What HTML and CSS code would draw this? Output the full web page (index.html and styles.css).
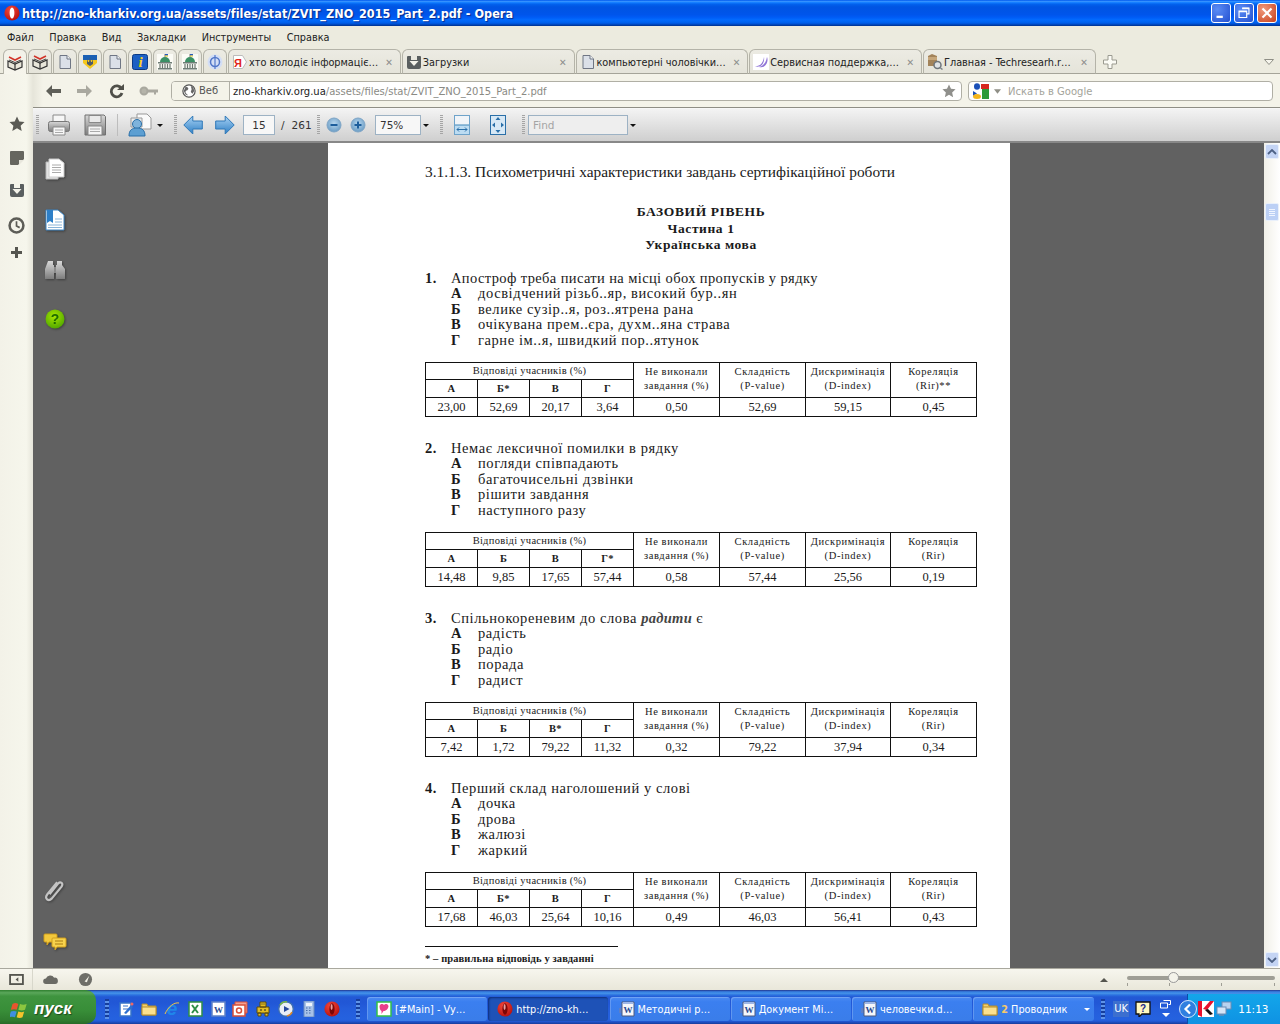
FILE: index.html
```html
<!DOCTYPE html>
<html lang="uk">
<head>
    <meta charset="UTF-8">
    <title>http://zno-kharkiv.org.ua/assets/files/stat/ZVIT_ZNO_2015_Part_2.pdf - Opera</title>
    <link rel="stylesheet" href="styles.css">
</head>
<body>
    <svg class="sprite" width="0" height="0">
        <defs>
            <linearGradient id="g-arrow" x1="0" y1="0" x2="0" y2="1"><stop offset="0" stop-color="#a9d3f5"/><stop offset="1" stop-color="#2f7fc4"/></linearGradient>
            <linearGradient id="g-gray" x1="0" y1="0" x2="0" y2="1"><stop offset="0" stop-color="#d8d8d8"/><stop offset="1" stop-color="#7d7d7d"/></linearGradient>
            <radialGradient id="g-red" cx=".4" cy=".3" r=".8"><stop offset="0" stop-color="#f5483a"/><stop offset="1" stop-color="#b00c0c"/></radialGradient>
            <radialGradient id="g-green" cx=".45" cy=".35" r=".7"><stop offset="0" stop-color="#a6e600"/><stop offset="1" stop-color="#4da400"/></radialGradient>
            <radialGradient id="g-zoom" cx=".5" cy=".4" r=".6"><stop offset="0" stop-color="#b7d7ef"/><stop offset="1" stop-color="#6a9cc4"/></radialGradient>
            <symbol id="i-opera" viewBox="0 0 16 16"><circle cx="8" cy="8" r="7.6" fill="url(#g-red)"/><ellipse cx="8" cy="8" rx="2.4" ry="5.6" fill="#fff"/></symbol>
            <symbol id="i-opera-dark" viewBox="0 0 16 16"><circle cx="8" cy="8" r="7.6" fill="url(#g-red)"/><ellipse cx="8" cy="8" rx="2.6" ry="5.8" fill="#7c0606"/><ellipse cx="7.6" cy="6" rx="1" ry="3" fill="#e9a0a0"/></symbol>
            <symbol id="i-book" viewBox="0 0 16 16"><path d="M2 2l6 3 6-3" fill="none" stroke="#d2352b" stroke-width="1.6"/><path d="M1 6l7 3 7-3v6l-7 3-7-3z" fill="#e8e6da" stroke="#333" stroke-width="1.2"/><path d="M8 9v6" stroke="#333" stroke-width="1.2"/><path d="M2 5l6 2.500 6-2.500" fill="none" stroke="#444"/></symbol>
            <symbol id="i-doc" viewBox="0 0 16 16"><path d="M3 1.500h7l3.500 3.500v9.500h-10.500z" fill="#dbe0e8" stroke="#6f7684"/><path d="M10 1.500v3.500h3.500" fill="#f5f6f8" stroke="#6f7684"/></symbol>
            <symbol id="i-shield" viewBox="0 0 16 16"><path d="M1 1h14v8l-7 6-7-6z" fill="#f6c81e"/><path d="M1 1h14v5h-14z" fill="#1a5fb4"/><path d="M5 4v6l3 2 3-2v-6l-1 4h-1l-1-5-1 5h-1z" fill="#4c5a6b"/></symbol>
            <symbol id="i-info" viewBox="0 0 16 16"><rect x=".5" y=".5" width="15" height="15" rx="2" fill="#1b5fc4" stroke="#0b3a86"/><text x="8.500" y="13" class="svg-i">i</text></symbol>
            <symbol id="i-rada" viewBox="0 0 16 16"><rect width="16" height="16" fill="#fbfbf6"/><path d="M8 0v3" stroke="#777"/><path d="M8 0h3v1.500h-3z" fill="#2459c0"/><path d="M8 1.500h3v1h-3z" fill="#e7c71c"/><path d="M3 8a5 5 0 0 1 10 0z" fill="#3a9065"/><path d="M1 8h14v1.500h-14zM1 14h14v1.500h-14z" fill="#6f7d76"/><path d="M3 10v4M5.500 10v4M8 10v4M10.500 10v4M13 10v4" stroke="#6b7770" stroke-width="1.200"/></symbol>
            <symbol id="i-phi" viewBox="0 0 16 16"><circle cx="8" cy="8" r="7.500" fill="#d3def5"/><circle cx="8" cy="8" r="4.500" fill="none" stroke="#5277c9" stroke-width="1.500"/><path d="M8 1v14" stroke="#5277c9" stroke-width="1.200"/></symbol>
            <symbol id="i-yandex" viewBox="0 0 16 16"><path d="M1.500 1.500h9l4 6.500-4 6.500h-9z" fill="#fff" stroke="#bbb"/><text x="6" y="13" class="svg-ya">Я</text></symbol>
            <symbol id="i-dl" viewBox="0 0 16 16"><path d="M2 2h3v4h6v-4h3a1 1 0 0 1 1 1v10a2 2 0 0 1-2 2h-10a2 2 0 0 1-2-2v-10a1 1 0 0 1 1-1z" fill="#5a5f60"/><path d="M3.500 7h9l-4.500 5z" fill="#f4f3ea"/></symbol>
            <symbol id="i-swoosh" viewBox="0 0 16 16"><rect width="16" height="16" fill="#fff"/><path d="M1 12c5 1 9-2 10-9 1 6-3 12-10 9zM6 13c4-1 7-4 8-10 2 5-2 12-8 10z" fill="#8f74d6"/></symbol>
            <symbol id="i-box" viewBox="0 0 16 16"><path d="M1 2l4-2 5 2v10h-9z" fill="#a2835a"/><path d="M1 3h9v3h-9z" fill="#c6a67a"/><circle cx="10.500" cy="11" r="3.500" fill="#dfe3e6" stroke="#6e757b" stroke-width="1.500"/><path d="M13 13.500l2.500 2" stroke="#7c8388" stroke-width="1.500"/></symbol>
            <symbol id="i-google" viewBox="0 0 16 16"><rect width="16" height="16" fill="#fff"/><path d="M8 1h8v5h-8z" fill="#d7261e"/><path d="M9 6h7v10h-7z" fill="#2c9a3a"/><ellipse cx="4" cy="3.500" rx="3" ry="3.300" fill="#1b50b8"/><path d="M0 8l4 2.500-4 2.500z" fill="#1b50b8"/><ellipse cx="4" cy="13.500" rx="4" ry="2.500" fill="#f4b61b"/></symbol>
            <symbol id="i-star" viewBox="0 0 16 16"><path d="M8 .5l2.300 5 5.200.6-3.900 3.600 1.100 5.300-4.700-2.700-4.700 2.700 1.100-5.300-3.900-3.600 5.200-.6z"/></symbol>
            <symbol id="i-globe" viewBox="0 0 16 16"><circle cx="8" cy="8" r="7" fill="#fff" stroke="#555" stroke-width="1.400"/><path d="M4 3c2 0 4 1 3 3s-3 1-3 3 2 2 3 4l-3-1-2-4zM10 2l3 2 1 4-2 3-2-2 1-3z" fill="#666"/></symbol>
            <symbol id="i-print" viewBox="0 0 24 24"><path d="M6 2h12v7h-12z" fill="#f6f6f6" stroke="#8a8a8a"/><rect x="1.500" y="8.500" width="21" height="10" rx="2" fill="url(#g-gray)" stroke="#777"/><path d="M6 14h12v8h-12z" fill="#f7f7f7" stroke="#8a8a8a"/><path d="M8 17h8M8 19.500h8" stroke="#aaa"/></symbol>
            <symbol id="i-save" viewBox="0 0 24 24"><path d="M2 2h19l1.500 1.500v18.500h-20.500z" fill="url(#g-gray)" stroke="#707070"/><path d="M6 2.500h12v7h-12z" fill="#e9e9e9" stroke="#888"/><path d="M5 13h14v9h-14z" fill="#f4f4f4" stroke="#888"/><path d="M7 16h10M7 18.500h10" stroke="#aaa"/></symbol>
            <symbol id="i-review" viewBox="0 0 24 24"><path d="M9 1h10l4 4v11h-14z" fill="#fafafa" stroke="#999"/><path d="M3 5h11v9h-11z" fill="#eee" stroke="#999"/><circle cx="9" cy="11" r="4.500" fill="#7eb3dc" stroke="#2a6fa8"/><path d="M1 23c0-6 3-8 8-8s8 2 8 8z" fill="#5d9fd2" stroke="#2a6fa8"/></symbol>
            <symbol id="i-arrow" viewBox="0 0 20 20"><path d="M.8 10l9-9v5h9.500v8h-9.500v5z" fill="url(#g-arrow)" stroke="#2f78b8"/></symbol>
            <symbol id="i-minus" viewBox="0 0 16 16"><circle cx="8" cy="8" r="7" fill="url(#g-zoom)" stroke="#7fa5c6"/><path d="M4.500 8h7" stroke="#1d5e9c" stroke-width="2"/></symbol>
            <symbol id="i-plus" viewBox="0 0 16 16"><circle cx="8" cy="8" r="7" fill="url(#g-zoom)" stroke="#7fa5c6"/><path d="M4.500 8h7M8 4.500v7" stroke="#1d5e9c" stroke-width="2"/></symbol>
            <symbol id="i-fitw" viewBox="0 0 16 20"><rect x=".5" y=".5" width="15" height="19" fill="#f0f4f8" stroke="#6ea3ca"/><path d="M1 10h14v9h-14z" fill="#bcdcf2"/><path d="M1 10h14" stroke="#3f86b8"/><path d="M3 14.500h10M3 14.500l2-2M3 14.500l2 2M13 14.500l-2-2M13 14.500l-2 2" stroke="#2a6fa8" fill="none"/></symbol>
            <symbol id="i-fitp" viewBox="0 0 16 20"><rect x=".5" y=".5" width="15" height="19" fill="#d7e8f5" stroke="#2a6fa8"/><path d="M8 2l-2.500 3h5zM8 18l-2.500-3h5zM2 10l3-2.500v5zM14 10l-3-2.500v5z" fill="#2a6fa8"/></symbol>
            <symbol id="i-pages" viewBox="0 0 20 22"><path d="M1 4h12v17h-12z" fill="#e4e4e4" stroke="#bbb"/><path d="M4 1h10l5 4v14h-15z" fill="#fff" stroke="#ccc"/><path d="M7 7h9M7 9.500h9M7 12h9M7 14.500h9" stroke="#aaa"/></symbol>
            <symbol id="i-bookmark" viewBox="0 0 20 22"><path d="M1 1h12l6 5v15h-18z" fill="#fff" stroke="#3f86c4"/><path d="M2 1h6v13l-3-2-3 2z" fill="#2d7fc8"/><path d="M10 10h7M10 13h7M3 16h14M3 18.500h14" stroke="#8ab4d8"/></symbol>
            <symbol id="i-binoc" viewBox="0 0 22 20"><path d="M4 1h5v4h1v14h-9v-10z" fill="url(#g-gray)"/><path d="M13 1h5v4l3 4v10h-9v-14h1z" fill="url(#g-gray)"/><path d="M10 7h2v6h-2z" fill="#8a8a8a"/></symbol>
            <symbol id="i-help" viewBox="0 0 20 20"><circle cx="10" cy="10" r="9.500" fill="url(#g-green)"/><text x="10" y="15" class="svg-help">?</text></symbol>
            <symbol id="i-clip" viewBox="0 0 20 22"><path d="M5 14l8-10c2-2 5 0 3 3l-9 11c-3 3-7 0-4-4l9-11" fill="none" stroke="#c4c4c4" stroke-width="2"/></symbol>
            <symbol id="i-comment" viewBox="0 0 24 18"><path d="M2 1h11a1 1 0 0 1 1 1v6a1 1 0 0 1-1 1h-7l-2 3v-3h-2a1 1 0 0 1-1-1v-6a1 1 0 0 1 1-1z" fill="#f2c83c" stroke="#d19f1c"/><path d="M10 5h12a1 1 0 0 1 1 1v7a1 1 0 0 1-1 1h-8l-2 3v-3h-2a1 1 0 0 1-1-1v-7a1 1 0 0 1 1-1z" fill="#f7d24c" stroke="#d19f1c"/><path d="M12 8h8M12 11h8" stroke="#a87b12"/></symbol>
            <symbol id="i-note" viewBox="0 0 14 14"><path d="M1 0h12a1 1 0 0 1 1 1v7l-6 6h-7a1 1 0 0 1-1-1v-12a1 1 0 0 1 1-1z"/><path d="M9 9h5l-5 5z" fill="#e7e6dc"/></symbol>
            <symbol id="i-clock" viewBox="0 0 16 16"><circle cx="8" cy="8" r="6.500" fill="none" stroke="currentColor" stroke-width="2.400"/><path d="M8 4v4.500l3 1.500" fill="none" stroke="currentColor" stroke-width="1.600"/></symbol>
            <symbol id="i-cloud" viewBox="0 0 16 12"><path d="M3 11a3 3 0 0 1 0-6 5 5 0 0 1 9-1 3.500 3.500 0 0 1 1 7z"/></symbol>
            <symbol id="i-gauge" viewBox="0 0 16 16"><circle cx="8" cy="8" r="7"/><path d="M7 10l5-6-2.500 7z" fill="#f2f1e6"/></symbol>
            <symbol id="i-word" viewBox="0 0 16 16"><path d="M0 7h3v5h-3z" fill="#5b7fc9"/><path d="M3 1h12v14h-12z" fill="#f4f6fb" stroke="#4a5a80"/><rect x="4" y="1" width="10" height="2" fill="#9db6e6"/><text x="9" y="12" class="svg-w">W</text></symbol>
            <symbol id="i-folder" viewBox="0 0 16 16"><path d="M1 3h5l1 2h8v9h-14z" fill="#f3cf6b" stroke="#b48c2a"/><path d="M1 6h14v8h-14z" fill="#fbe08e" stroke="#b48c2a"/></symbol>
            <symbol id="i-mail" viewBox="0 0 16 16"><path d="M2 2h11v13h-11z" fill="#fff" stroke="#3673c9" stroke-width="1.500"/><path d="M5 5h5M5 8h5" stroke="#3673c9"/><path d="M6 12l7-8 2 2-7 7z" fill="#2d6fcf"/><circle cx="14" cy="3" r="1.500" fill="#e66"/></symbol>
            <symbol id="i-ie" viewBox="0 0 16 16"><text x="8" y="14" class="svg-e">e</text><path d="M1 13c3-7 9-12 14-11" fill="none" stroke="#f2c744" stroke-width="1"/></symbol>
            <symbol id="i-excel" viewBox="0 0 16 16"><path d="M2 1h13v14h-13z" fill="#fff" stroke="#2f8f47" stroke-width="1.500"/><path d="M5 4l6 8M11 4l-6 8" stroke="#2f8f47" stroke-width="2"/></symbol>
            <symbol id="i-msw" viewBox="0 0 16 16"><path d="M2 1h13v14h-13z" fill="#fff" stroke="#5f82c8" stroke-width="1.500"/><text x="8.500" y="12" class="svg-w">W</text></symbol>
            <symbol id="i-ppt" viewBox="0 0 16 16"><path d="M3 1h12v11h-12z" fill="#f1a090" stroke="#d9503a"/><path d="M1 4h12v11h-12z" fill="#fff" stroke="#d9503a" stroke-width="1.500"/><circle cx="7" cy="9.500" r="2.500" fill="none" stroke="#d9503a" stroke-width="1.500"/></symbol>
            <symbol id="i-robot" viewBox="0 0 16 16"><path d="M5 1h6v5h-6zM2 6h12v6h-12zM3 12h3v3h-3zM10 12h3v3h-3z" fill="#e2bd23" stroke="#5a4a0d"/><path d="M6.500 3h1M8.500 3h1M5 9h2M9 9h2" stroke="#222"/></symbol>
            <symbol id="i-player" viewBox="0 0 16 16"><circle cx="8" cy="8" r="7.300" fill="#e9eef6" stroke="#3e6fb2" stroke-width="1.400"/><path d="M2 4a7 7 0 0 1 7-3" fill="none" stroke="#78b34a" stroke-width="1.500"/><path d="M14 11a7 7 0 0 1-5 4" fill="none" stroke="#e08a2c" stroke-width="1.500"/><path d="M6 5l5.500 3-5.500 3z" fill="#27489a"/></symbol>
            <symbol id="i-calc" viewBox="0 0 16 16"><path d="M3 0h10v16h-10z" fill="#a8c2e8" stroke="#6b8bbf"/><rect x="5" y="2" width="6" height="3" fill="#eef4fc"/><path d="M5 7h1.500M8 7h1.500M5 9.500h1.500M8 9.500h1.500M5 12h1.500M8 12h1.500" stroke="#4a6ea8"/></symbol>
            <symbol id="i-msg" viewBox="0 0 16 16"><rect x="1" y="1" width="14" height="14" fill="#fff" stroke="#32c04a" stroke-width="1.500"/><path d="M3.500 5a2.500 2.500 0 0 1 4.500-1 2.500 2.500 0 0 1 4.500 1c0 3-3 5-5 5l-2 3v-3c-1.500-.5-2-3-2-5z" fill="#ea3f8b"/></symbol>
            <symbol id="i-bubble" viewBox="0 0 16 16"><path d="M1 1h14v12h-8l-3 3v-3h-3z" fill="#fff8c2" stroke="#111" stroke-width="1.300"/><text x="8" y="11" class="svg-q">?</text></symbol>
            <symbol id="i-kasp" viewBox="0 0 16 16"><rect width="16" height="16" fill="#fff"/><path d="M0 0h4v16l-4-2zM5 8l7-8h4l-7 9z" fill="#e8112d"/><path d="M7 9l5 5 3-1-5-5z" fill="#111"/></symbol>
            <symbol id="i-net" viewBox="0 0 16 16"><rect x="6" y="1" width="9" height="7" fill="#b8d2ef" stroke="#6a8cb5"/><rect x="1" y="6" width="9" height="7" fill="#d6e6f7" stroke="#6a8cb5"/><path d="M3 14h5" stroke="#6a8cb5" stroke-width="1.500"/></symbol>
            <symbol id="i-flag" viewBox="0 0 24 24"><path d="M3 6c3-2 5-1 7 0l-2 7c-2-1-4-1-7 0z" fill="#e8552e"/><path d="M12 6c3 1 5 1 8 0l-2 7c-3 1-5 1-8 0z" fill="#8cc63f"/><path d="M1 15c2-1 5-1 7 0l-2 7c-2-1-4-1-7 0z" fill="#3f8fe0"/><path d="M10 15c3 1 5 1 7 0l-2 7c-2 1-5 1-7 0z" fill="#f5c32c"/></symbol>
        </defs>
    </svg>

    <header class="titlebar">
        <svg class="title-logo"><use href="#i-opera"/></svg>
        <span class="title-text">http://zno-kharkiv.org.ua/assets/files/stat/ZVIT_ZNO_2015_Part_2.pdf - Opera</span>
        <div class="win-btn">
            <svg viewBox="0 0 20 20"><path d="M5 13h7v2.500h-7z" fill="#fff"/></svg>
        </div>
        <div class="win-btn">
            <svg viewBox="0 0 20 20"><path d="M8 4.500h7.500v6.500h-2.500M4.500 8h8.500v7h-8.500z" fill="none" stroke="#fff" stroke-width="1.300"/><path d="M8 5h7.500M4.500 8.500h8.500" stroke="#fff" stroke-width="1.500"/></svg>
        </div>
        <div class="win-btn win-close">
            <svg viewBox="0 0 20 20"><path d="M5 5l10 10M15 5l-10 10" stroke="#fff" stroke-width="2.400"/></svg>
        </div>
    </header>

    <nav class="menubar">
        <span>Файл</span><span>Правка</span><span>Вид</span><span>Закладки</span><span>Инструменты</span><span>Справка</span>
    </nav>

    <div class="tabbar">
        <div class="tab tab-pin tab-active"><svg class="ico"><use href="#i-book"/></svg></div>
        <div class="tab tab-pin"><svg class="ico"><use href="#i-book"/></svg></div>
        <div class="tab tab-pin"><svg class="ico"><use href="#i-doc"/></svg></div>
        <div class="tab tab-pin"><svg class="ico"><use href="#i-shield"/></svg></div>
        <div class="tab tab-pin"><svg class="ico"><use href="#i-doc"/></svg></div>
        <div class="tab tab-pin"><svg class="ico"><use href="#i-info"/></svg></div>
        <div class="tab tab-pin"><svg class="ico"><use href="#i-rada"/></svg></div>
        <div class="tab tab-pin"><svg class="ico"><use href="#i-rada"/></svg></div>
        <div class="tab tab-pin"><svg class="ico"><use href="#i-phi"/></svg></div>
        <div class="tab"><svg class="ico"><use href="#i-yandex"/></svg><span class="tab-text">хто володіє інформаціє…</span><span class="tab-x">✕</span></div>
        <div class="tab"><svg class="ico"><use href="#i-dl"/></svg><span class="tab-text">Загрузки</span><span class="tab-x">✕</span></div>
        <div class="tab"><svg class="ico"><use href="#i-doc"/></svg><span class="tab-text">компьютерні чоловічки…</span><span class="tab-x">✕</span></div>
        <div class="tab"><svg class="ico"><use href="#i-swoosh"/></svg><span class="tab-text">Сервисная поддержка,…</span><span class="tab-x">✕</span></div>
        <div class="tab"><svg class="ico"><use href="#i-box"/></svg><span class="tab-text">Главная - Techresearh.r…</span><span class="tab-x">✕</span></div>
        <svg class="tab-new" viewBox="0 0 14 14"><path d="M5 .5h4v4.500h4.500v4h-4.500v4.500h-4v-4.500h-4.500v-4h4.500z" fill="#fbfbf5" stroke="#9a9a90"/></svg>
        <svg class="tab-list" viewBox="0 0 10 6"><path d="M.5.5h9l-4.500 5z" fill="#f6f5ec" stroke="#8f8f86"/></svg>
    </div>

    <div class="workspace">
        <aside class="sidebar">
            <svg class="side-star"><use href="#i-star"/></svg>
            <svg class="side-note"><use href="#i-note"/></svg>
            <svg class="side-dl"><use href="#i-dl"/></svg>
            <svg class="side-clock"><use href="#i-clock"/></svg>
            <span class="side-plus"></span>
        </aside>

        <div class="content">
            <div class="addressbar">
                <svg class="nav-btn" viewBox="0 0 32 18"><path d="M9 9l6-6v4h9v4h-9v4z" fill="#5f5f58"/></svg>
                <svg class="nav-btn" viewBox="0 0 32 18"><path d="M23 9l-6-6v4h-9v4h9v4z" fill="#a9a89f"/></svg>
                <svg class="nav-btn" viewBox="0 0 32 18"><path d="M20.500 6.500a5.500 5.500 0 1 0 .5 4.500" fill="none" stroke="#4f4f49" stroke-width="2.800"/><path d="M16 8h7v-6z" fill="#4f4f49"/></svg>
                <svg class="nav-btn" viewBox="0 0 32 18"><circle cx="11" cy="9" r="3.500" fill="#b5b4aa" stroke="#a9a89f" stroke-width="2"/><path d="M14 7.500h11v3h-2v2h-2v-2h-7z" fill="#a9a89f"/></svg>
                <div class="addr">
                    <div class="addr-site"><svg class="ico-14"><use href="#i-globe"/></svg><span>Веб</span></div>
                    <div class="addr-url"><b>zno-kharkiv.org.ua</b>/assets/files/stat/ZVIT_ZNO_2015_Part_2.pdf</div>
                    <svg class="addr-star"><use href="#i-star"/></svg>
                </div>
                <div class="search">
                    <svg class="ico"><use href="#i-google"/></svg>
                    <svg class="search-caret" viewBox="0 0 8 5"><path d="M0 0h8l-4 5z" fill="#8f8f86"/></svg>
                    <span>Искать в Google</span>
                </div>
            </div>

            <div class="pdfbar">
                <span class="grip"></span>
                <div class="tb-btn tb-36 gap-2"><svg class="ico-24"><use href="#i-print"/></svg></div>
                <div class="tb-btn tb-36"><svg class="ico-24"><use href="#i-save"/></svg></div>
                <span class="tb-sep"></span>
                <div class="tb-btn tb-review"><svg class="ico-24"><use href="#i-review"/></svg></div>
                <span class="caret caret-review"></span>
                <span class="grip gap-11"></span>
                <div class="tb-btn tb-32"><svg class="ico-20"><use href="#i-arrow"/></svg></div>
                <div class="tb-btn tb-32"><svg class="ico-20 flip"><use href="#i-arrow"/></svg></div>
                <div class="tb-input page-input gap-2">15</div>
                <span class="page-total"><span>/</span><span>261</span></span>
                <span class="grip"></span>
                <div class="tb-btn tb-24 gap-2"><svg class="ico"><use href="#i-minus"/></svg></div>
                <div class="tb-btn tb-24"><svg class="ico"><use href="#i-plus"/></svg></div>
                <div class="tb-input zoom-input gap-5">75%</div>
                <span class="caret gap-2"></span>
                <span class="grip gap-11"></span>
                <div class="tb-btn tb-36 gap-1"><svg class="ico-fit"><use href="#i-fitw"/></svg></div>
                <div class="tb-btn tb-36"><svg class="ico-fit"><use href="#i-fitp"/></svg></div>
                <span class="grip gap-6"></span>
                <div class="tb-input find-input gap-3">Find</div>
                <span class="caret gap-2"></span>
            </div>

            <div class="viewer">
                <div class="pdf-nav">
                    <svg class="pdf-ico pages"><use href="#i-pages"/></svg>
                    <svg class="pdf-ico bookmark"><use href="#i-bookmark"/></svg>
                    <svg class="pdf-ico binoc"><use href="#i-binoc"/></svg>
                    <svg class="pdf-ico help"><use href="#i-help"/></svg>
                    <svg class="pdf-ico clip"><use href="#i-clip"/></svg>
                    <svg class="pdf-ico comment"><use href="#i-comment"/></svg>
                </div>

                <div class="pdf-area">
                    <main class="page">
                        <p class="section-title">3.1.1.3. Психометричні характеристики завдань сертифікаційної роботи</p>
                        <div class="heading">
                            <div>БАЗОВИЙ РІВЕНЬ</div>
                            <div>Частина 1</div>
                            <div>Українська мова</div>
                        </div>

                        <section class="task">
                            <div class="q q-tight"><b>1.</b><span>Апостроф треба писати на місці обох пропусків у рядку</span></div>
                            <div class="opt"><b>А</b><span>досвідчений різьб..яр, високий бур..ян</span></div>
                            <div class="opt"><b>Б</b><span>велике сузір..я, роз..ятрена рана</span></div>
                            <div class="opt"><b>В</b><span>очікувана прем..єра, духм..яна страва</span></div>
                            <div class="opt"><b>Г</b><span>гарне ім..я, швидкий пор..ятунок</span></div>
                            <table class="stats">
                                <colgroup><col class="c-a"><col class="c-a"><col class="c-a"><col class="c-a"><col class="c-b"><col class="c-b"><col class="c-c"><col></colgroup>
                                <tr class="r1"><th colspan="4">Відповіді учасників (%)</th><th rowspan="2">Не виконали<br>завдання (%)</th><th rowspan="2">Складність<br>(P-value)</th><th rowspan="2">Дискримінація<br>(D-index)</th><th rowspan="2">Кореляція<br>(Rir)**</th></tr>
                                <tr class="r2"><th class="l">А</th><th class="l">Б*</th><th class="l">В</th><th class="l">Г</th></tr>
                                <tr class="r3"><td>23,00</td><td>52,69</td><td>20,17</td><td>3,64</td><td>0,50</td><td>52,69</td><td>59,15</td><td>0,45</td></tr>
                            </table>
                        </section>

                        <section class="task">
                            <div class="q"><b>2.</b><span>Немає лексичної помилки в рядку</span></div>
                            <div class="opt"><b>А</b><span>погляди співпадають</span></div>
                            <div class="opt"><b>Б</b><span>багаточисельні дзвінки</span></div>
                            <div class="opt"><b>В</b><span>рішити завдання</span></div>
                            <div class="opt"><b>Г</b><span>наступного разу</span></div>
                            <table class="stats">
                                <colgroup><col class="c-a"><col class="c-a"><col class="c-a"><col class="c-a"><col class="c-b"><col class="c-b"><col class="c-c"><col></colgroup>
                                <tr class="r1"><th colspan="4">Відповіді учасників (%)</th><th rowspan="2">Не виконали<br>завдання (%)</th><th rowspan="2">Складність<br>(P-value)</th><th rowspan="2">Дискримінація<br>(D-index)</th><th rowspan="2">Кореляція<br>(Rir)</th></tr>
                                <tr class="r2"><th class="l">А</th><th class="l">Б</th><th class="l">В</th><th class="l">Г*</th></tr>
                                <tr class="r3"><td>14,48</td><td>9,85</td><td>17,65</td><td>57,44</td><td>0,58</td><td>57,44</td><td>25,56</td><td>0,19</td></tr>
                            </table>
                        </section>

                        <section class="task">
                            <div class="q"><b>3.</b><span>Спільнокореневим до слова <b><i>радити</i></b> є</span></div>
                            <div class="opt"><b>А</b><span>радість</span></div>
                            <div class="opt"><b>Б</b><span>радіо</span></div>
                            <div class="opt"><b>В</b><span>порада</span></div>
                            <div class="opt"><b>Г</b><span>радист</span></div>
                            <table class="stats">
                                <colgroup><col class="c-a"><col class="c-a"><col class="c-a"><col class="c-a"><col class="c-b"><col class="c-b"><col class="c-c"><col></colgroup>
                                <tr class="r1"><th colspan="4">Відповіді учасників (%)</th><th rowspan="2">Не виконали<br>завдання (%)</th><th rowspan="2">Складність<br>(P-value)</th><th rowspan="2">Дискримінація<br>(D-index)</th><th rowspan="2">Кореляція<br>(Rir)</th></tr>
                                <tr class="r2"><th class="l">А</th><th class="l">Б</th><th class="l">В*</th><th class="l">Г</th></tr>
                                <tr class="r3"><td>7,42</td><td>1,72</td><td>79,22</td><td>11,32</td><td>0,32</td><td>79,22</td><td>37,94</td><td>0,34</td></tr>
                            </table>
                        </section>

                        <section class="task">
                            <div class="q"><b>4.</b><span>Перший склад наголошений у слові</span></div>
                            <div class="opt"><b>А</b><span>дочка</span></div>
                            <div class="opt"><b>Б</b><span>дрова</span></div>
                            <div class="opt"><b>В</b><span>жалюзі</span></div>
                            <div class="opt"><b>Г</b><span>жаркий</span></div>
                            <table class="stats">
                                <colgroup><col class="c-a"><col class="c-a"><col class="c-a"><col class="c-a"><col class="c-b"><col class="c-b"><col class="c-c"><col></colgroup>
                                <tr class="r1"><th colspan="4">Відповіді учасників (%)</th><th rowspan="2">Не виконали<br>завдання (%)</th><th rowspan="2">Складність<br>(P-value)</th><th rowspan="2">Дискримінація<br>(D-index)</th><th rowspan="2">Кореляція<br>(Rir)</th></tr>
                                <tr class="r2"><th class="l">А</th><th class="l">Б*</th><th class="l">В</th><th class="l">Г</th></tr>
                                <tr class="r3"><td>17,68</td><td>46,03</td><td>25,64</td><td>10,16</td><td>0,49</td><td>46,03</td><td>56,41</td><td>0,43</td></tr>
                            </table>
                        </section>

                        <div class="footnote"><b>* – правильна відповідь у завданні</b></div>
                    </main>
                </div>

                <div class="scrollbar">
                    <div class="sb-btn"><svg viewBox="0 0 10 6"><path d="M1 5l4-4 4 4" fill="none" stroke="#4d6185" stroke-width="1.800"/></svg></div>
                    <div class="sb-thumb"><span></span><span></span><span></span><span></span></div>
                    <div class="sb-btn sb-down"><svg viewBox="0 0 10 6"><path d="M1 1l4 4 4-4" fill="none" stroke="#4d6185" stroke-width="1.800"/></svg></div>
                </div>
            </div>
        </div>
    </div>

    <div class="statusbar">
        <div class="panel-toggle"><svg viewBox="0 0 16 12"><rect x="1" y="1" width="14" height="10" fill="none" stroke="#55554f" stroke-width="2"/><path d="M10 3.500v5l-3-2.500z" fill="#55554f"/></svg></div>
        <svg class="st-cloud"><use href="#i-cloud"/></svg>
        <svg class="st-gauge"><use href="#i-gauge"/></svg>
        <svg class="st-up" viewBox="0 0 8 4"><path d="M4 0l4 4h-8z" fill="#55554f"/></svg>
        <div class="slider"><span class="slider-knob"></span></div>
    </div>

    <footer class="taskbar">
        <div class="start"><svg class="start-flag"><use href="#i-flag"/></svg><span>пуск</span></div>
        <span class="task-grip"></span>
        <div class="quick">
            <svg class="ico"><use href="#i-mail"/></svg>
            <svg class="ico"><use href="#i-folder"/></svg>
            <svg class="ico"><use href="#i-ie"/></svg>
            <svg class="ico"><use href="#i-excel"/></svg>
            <svg class="ico"><use href="#i-msw"/></svg>
            <svg class="ico"><use href="#i-ppt"/></svg>
            <svg class="ico"><use href="#i-robot"/></svg>
            <svg class="ico"><use href="#i-player"/></svg>
            <svg class="ico"><use href="#i-calc"/></svg>
            <svg class="ico"><use href="#i-opera-dark"/></svg>
        </div>
        <span class="task-grip"></span>
        <div class="tasks">
            <div class="task-btn"><svg class="ico"><use href="#i-msg"/></svg><span>[#Main] - Vy…</span></div>
            <div class="task-btn task-active"><svg class="ico"><use href="#i-opera-dark"/></svg><span>http://zno-kh…</span></div>
            <div class="task-btn"><svg class="ico"><use href="#i-word"/></svg><span>Методичні р…</span></div>
            <div class="task-btn"><svg class="ico"><use href="#i-word"/></svg><span>Документ Mi…</span></div>
            <div class="task-btn"><svg class="ico"><use href="#i-word"/></svg><span>человечки.d…</span></div>
            <div class="task-btn task-group"><svg class="ico"><use href="#i-folder"/></svg><span><em>2</em> Проводник</span><i class="group-caret"></i></div>
        </div>
        <span class="task-grip task-grip-r"></span>
        <span class="lang">UK</span>
        <svg class="ico help-bubble"><use href="#i-bubble"/></svg>
        <svg class="switcher" viewBox="0 0 14 20"><path d="M4.500 1.500h7v4h-2M1.500 4h7v5h-7z" fill="none" stroke="#fff"/><path d="M3 14h8l-4 4z" fill="#fff"/></svg>
        <div class="tray">
            <svg class="tray-chevron" viewBox="0 0 18 18"><circle cx="9" cy="9" r="8.500" fill="#2f7fe0" stroke="#d3e6fb"/><path d="M11 4.500l-4.500 4.500 4.500 4.500" fill="none" stroke="#fff" stroke-width="2.200"/></svg>
            <svg class="ico"><use href="#i-kasp"/></svg>
            <svg class="ico"><use href="#i-net"/></svg>
            <span class="clock">11:13</span>
        </div>
    </footer>
</body>
</html>
```

FILE: styles.css
```css
* {
    box-sizing: border-box;
}
html, body {
    margin: 0;
    height: 1024px;
    overflow: hidden;
}
body {
    display: flex;
    flex-direction: column;
    width: 1280px;
    font-family: "DejaVu Sans", sans-serif;
    font-size: 10px;
    color: #222;
    background: #ecebdf;
}
.sprite {
    position: absolute;
}
.svg-i {
    font: italic bold 15px "Liberation Serif", serif;
    fill: #f6d21f;
    text-anchor: middle;
}
.svg-ya {
    font: bold 11px "Liberation Sans", sans-serif;
    fill: #e0251b;
    text-anchor: middle;
}
.svg-help {
    font: bold 14px "Liberation Sans", sans-serif;
    fill: #1d6b00;
    text-anchor: middle;
}
.svg-w {
    font: bold 9px "Liberation Serif", serif;
    fill: #28498f;
    text-anchor: middle;
}
.svg-q {
    font: bold 10px "Liberation Sans", sans-serif;
    fill: #1a2a8a;
    text-anchor: middle;
}
.svg-e {
    font: italic bold 19px "Liberation Sans", sans-serif;
    fill: #1f86ea;
    text-anchor: middle;
}
.ico {
    width: 16px;
    height: 16px;
    flex: none;
}
.ico-14 {
    width: 14px;
    height: 14px;
    flex: none;
}
.ico-20 {
    width: 20px;
    height: 20px;
}
.ico-24 {
    width: 24px;
    height: 24px;
}
.flip {
    transform: scaleX(-1);
}

/* window title */
.titlebar {
    height: 26px;
    flex: none;
    display: flex;
    align-items: center;
    padding: 0 3px 0 4px;
    gap: 3px;
    background: linear-gradient(#0058ee 0, #3593ff 6%, #127dff 10%, #0262ee 16%, #0057e5 24%, #0054e3 30%, #0055eb 56%, #005bf5 66%, #026afe 76%, #0062ef 86%, #0052d6 92%, #0040ab 96%, #003092 100%);
}
.title-logo {
    width: 16px;
    height: 16px;
}
.title-text {
    flex: 1;
    margin-left: -1px;
    font: bold 12.5px "DejaVu Sans Condensed", "DejaVu Sans", sans-serif;
    letter-spacing: .05px;
    color: #fff;
    text-shadow: 1px 1px 1px #0a2a8a;
}
.win-btn {
    width: 20px;
    height: 20px;
    border: 1px solid #fff;
    border-radius: 3px;
    background: radial-gradient(circle at 30% 30%, #5b8cf5, #2350d0);
}
.win-btn svg {
    display: block;
    width: 18px;
    height: 18px;
}
.win-close {
    background: radial-gradient(circle at 30% 30%, #f09a7c, #c8401c);
}

/* menu */
.menubar {
    height: 22px;
    flex: none;
    display: flex;
    align-items: center;
    padding-left: 7px;
    gap: 15.5px;
    font: 10.8px "DejaVu Sans Condensed", "DejaVu Sans", sans-serif;
    background: #ecebdf;
}

/* tabs */
.tabbar {
    height: 26px;
    flex: none;
    display: flex;
    align-items: flex-end;
    gap: 1px;
    padding-left: 3px;
    background: linear-gradient(#ecebdf 0, #ecebdf 25px, #a5a499 25px);
}
.tab {
    width: 172.75px;
    height: 25px;
    flex: none;
    display: flex;
    align-items: center;
    padding: 1px 7px 0 3px;
    border: 1px solid #b4b3a8;
    border-bottom-color: #a5a499;
    border-radius: 6px 6px 0 0;
    background: linear-gradient(#ecebe3, #e5e4da);
    font: 10.8px "DejaVu Sans Condensed", "DejaVu Sans", sans-serif;
}
.tab-pin {
    width: 24px;
    justify-content: center;
    padding: 1px 0 0;
}
.tab-active {
    border-bottom: 0;
    background: linear-gradient(#f2f1e8, #f6f5ec);
}
.tab-text {
    flex: 1;
    min-width: 0;
    margin-left: 1px;
    white-space: nowrap;
}
.tab-x {
    font-size: 10px;
    font-weight: bold;
    color: #8d8e8c;
}
.tab-new {
    width: 14px;
    height: 14px;
    margin: 0 0 5px 6px;
}
.tab-list {
    width: 10px;
    height: 6px;
    margin: 0 0 9px 146px;
}

/* main area */
.workspace {
    flex: 1;
    display: flex;
    min-height: 0;
}
.sidebar {
    width: 33px;
    flex: none;
    display: flex;
    flex-direction: column;
    align-items: center;
    padding-top: 42px;
    color: #5d5d57;
    background: linear-gradient(90deg, #f3f2e8, #f6f6ec 80%, #e6e5da);
    fill: #66665f;
}
.side-star {
    width: 16px;
    height: 16px;
    fill: #5a5a54;
}
.side-note {
    width: 14px;
    height: 14px;
    margin-top: 19px;
}
.side-dl {
    width: 16px;
    height: 16px;
    margin-top: 17px;
}
.side-clock {
    width: 17px;
    height: 17px;
    margin-top: 19px;
}
.side-plus {
    width: 11px;
    height: 11px;
    margin-top: 13px;
    background: linear-gradient(#55554f, #55554f) center / 100% 3px no-repeat, linear-gradient(#55554f, #55554f) center / 3px 100% no-repeat;
}
.content {
    flex: 1;
    min-width: 0;
    display: flex;
    flex-direction: column;
}
.addressbar {
    height: 34px;
    flex: none;
    display: flex;
    align-items: center;
    padding: 0 7px 0 4px;
    border-bottom: 1px solid #8f8e85;
    background: linear-gradient(90deg, #e6e5da, #f4f3e9 10px);
}
.nav-btn {
    width: 32px;
    height: 18px;
    flex: none;
}
.addr {
    flex: 1;
    height: 20px;
    margin-left: 6px;
    display: flex;
    align-items: stretch;
    border: 1px solid #b0afa5;
    border-radius: 4px;
    background: #fff;
    overflow: hidden;
}
.addr-site {
    width: 58px;
    display: flex;
    align-items: center;
    gap: 3px;
    padding: 0 0 0 10px;
    border-right: 1px solid #b0afa5;
    background: #f4f3e9;
    color: #555;
}
.addr-url {
    flex: 1;
    padding-left: 3px;
    line-height: 20px;
    font-size: 10px;
    color: #8a8a84;
}
.addr-url b {
    font-weight: normal;
    color: #222;
}
.addr-star {
    width: 14px;
    height: 14px;
    margin: 2px 5px 0 0;
    fill: #8f8f8b;
}
.search {
    width: 305px;
    height: 20px;
    flex: none;
    margin-left: 6px;
    display: flex;
    align-items: center;
    padding: 1px 0 0 4px;
    border: 1px solid #b0afa5;
    border-radius: 4px;
    background: #fff;
    color: #a3a39a;
}
.search-caret {
    width: 7px;
    height: 5px;
    margin: 0 7px 0 5px;
}

/* pdf toolbar */
.pdfbar {
    height: 35px;
    flex: none;
    display: flex;
    align-items: center;
    padding: 0 0 0 3px;
    border-top: 1px solid #f7f7f7;
    border-bottom: 2px solid #888;
    background: linear-gradient(#f3f3f3, #cfcfcf);
    font-size: 10.5px;
    color: #333;
}
.grip {
    width: 3px;
    height: 20px;
    flex: none;
    background: repeating-linear-gradient(#a5a5a5 0 1px, transparent 1px 2px);
}
.tb-btn {
    display: flex;
    justify-content: center;
    align-items: center;
    flex: none;
}
.tb-36 {
    width: 36px;
}
.tb-32 {
    width: 32px;
}
.tb-24 {
    width: 24px;
}
.tb-sep {
    width: 1px;
    height: 22px;
    margin-left: 4px;
    background: #bdbdbd;
}
.tb-review {
    width: 24px;
    margin-left: 10px;
}
.caret {
    width: 0;
    height: 0;
    flex: none;
    border: 3px solid transparent;
    border-top: 3px solid #111;
    border-bottom: 0;
}
.caret-review {
    margin-left: 5px;
}
.gap-1 { margin-left: 1px; }
.gap-2 { margin-left: 2px; }
.gap-3 { margin-left: 3px; }
.gap-5 { margin-left: 5px; }
.gap-6 { margin-left: 6px; }
.gap-11 { margin-left: 11px; }
.tb-input {
    height: 20px;
    flex: none;
    display: flex;
    align-items: center;
    border: 1px solid #9db2c4;
    background: #f7f7f7;
    padding-left: 8px;
}
.page-input {
    width: 32px;
    justify-content: center;
    padding: 0;
}
.page-total {
    width: 42px;
    flex: none;
    display: flex;
    gap: 7px;
    padding-left: 6px;
}
.zoom-input {
    width: 46px;
    padding-left: 4px;
}
.find-input {
    width: 100px;
    padding-left: 4px;
    color: #a5a5a5;
    background: #eee;
}
.ico-fit {
    width: 16px;
    height: 20px;
}

/* document */
.viewer {
    flex: 1;
    min-height: 0;
    display: flex;
    background: #616161;
}
.pdf-nav {
    width: 41px;
    flex: none;
    display: flex;
    flex-direction: column;
    align-items: center;
    padding: 15px 0 17px 2px;
}
.pdf-ico {
    flex: none;
    filter: drop-shadow(1px 1px 1px rgba(0, 0, 0, .35));
}
.pages {
    width: 20px;
    height: 22px;
}
.bookmark {
    width: 20px;
    height: 22px;
    margin-top: 29px;
}
.binoc {
    width: 22px;
    height: 20px;
    margin-top: 29px;
}
.help {
    width: 20px;
    height: 20px;
    margin-top: 29px;
}
.clip {
    width: 22px;
    height: 24px;
    margin-top: auto;
}
.comment {
    width: 24px;
    height: 18px;
    margin-top: 30px;
}
.pdf-area {
    flex: 1;
    min-width: 0;
    display: flex;
    justify-content: center;
    overflow: hidden;
}
.page {
    width: 682px;
    flex: none;
    padding: 21px 33px 0 97px;
    background: #fff;
    font: 14px "Liberation Serif", serif;
    color: #1a1a1a;
}
.section-title {
    margin: 0;
    line-height: 16px;
    font-size: 15.4px;
    white-space: nowrap;
}
.heading {
    margin-top: 24px;
    line-height: 16.5px;
    text-align: center;
    font-weight: bold;
    font-size: 13.5px;
    letter-spacing: .6px;
}
.task {
    margin-top: 17px;
    margin-bottom: 24px;
    line-height: 15.5px;
    font-size: 14.5px;
    letter-spacing: .58px;
}
.task + .task {
    margin-top: 0;
}
.task:last-of-type {
    margin-bottom: 19px;
}
.q, .opt {
    display: flex;
    white-space: nowrap;
}
.q > b {
    width: 26px;
}
.q i {
    letter-spacing: .3px;
    color: #444;
}
.q-tight {
    letter-spacing: .38px;
}
.opt {
    padding-left: 26px;
}
.opt > b {
    width: 27px;
}
.stats {
    width: 552px;
    height: 55px;
    margin-top: 13.5px;
    border-collapse: collapse;
    table-layout: fixed;
    border: 1px solid #111;
    letter-spacing: 0;
}
.stats th, .stats td {
    padding: 0;
    border: 1px solid #111;
    text-align: center;
}
.stats th {
    font-weight: normal;
    font-size: 10.5px;
    line-height: 14px;
    letter-spacing: .28px;
}
.stats th[rowspan] {
    padding-bottom: 2px;
    letter-spacing: .6px;
}
.stats th.l {
    padding-top: 1px;
    font-weight: bold;
}
.stats td {
    font-size: 12.5px;
    line-height: 14px;
}
.c-a {
    width: 52px;
}
.c-b {
    width: 86px;
}
.c-c {
    width: 85px;
}
.r1 {
    height: 17px;
}
.r2 {
    height: 18px;
}
.r3 {
    height: 19px;
}
.footnote {
    width: 193px;
    padding-top: 6px;
    border-top: 1px solid #111;
    font-size: 10.5px;
    line-height: 12px;
    white-space: nowrap;
    letter-spacing: .1px;
}

/* scroll */
.scrollbar {
    width: 16px;
    flex: none;
    display: flex;
    flex-direction: column;
    align-items: center;
    padding-top: 1px;
    background: linear-gradient(90deg, #f1f0e8, #fff);
}
.sb-btn {
    width: 14px;
    height: 15px;
    display: flex;
    align-items: center;
    justify-content: center;
    border: 1px solid #e9f0fb;
    border-radius: 2px;
    background: #c4d4f4;
}
.sb-btn svg {
    width: 10px;
    height: 6px;
}
.sb-down {
    margin-top: auto;
    margin-bottom: 1px;
}
.sb-thumb {
    width: 14px;
    height: 18px;
    margin-top: 44px;
    display: flex;
    flex-direction: column;
    align-items: center;
    justify-content: center;
    gap: 1px;
    border: 1px solid #e9f0fb;
    border-radius: 2px;
    background: #bcd0f5;
}
.sb-thumb span {
    width: 6px;
    height: 1px;
    background: #f0f5ff;
}

/* status */
.statusbar {
    height: 22px;
    flex: none;
    display: flex;
    align-items: center;
    border-top: 1px solid #a9a89e;
    background: linear-gradient(#f7f6ee, #e9e7da);
}
.panel-toggle {
    width: 33px;
    height: 100%;
    flex: none;
    display: flex;
    align-items: center;
    justify-content: center;
    border-right: 1px solid #d8d7cb;
}
.panel-toggle svg {
    width: 15px;
    height: 11px;
}
.st-cloud {
    width: 15px;
    height: 11px;
    margin-left: 10px;
    fill: #6a6a64;
}
.st-gauge {
    width: 15px;
    height: 15px;
    margin-left: 20px;
    fill: #6e6e68;
}
.st-up {
    width: 8px;
    height: 4px;
    margin-left: 1007px;
}
.slider {
    position: relative;
    width: 148px;
    height: 4px;
    margin: 0 0 3px 19px;
    border-radius: 2px;
    background: #9f9e95;
}
.slider::after {
    content: "";
    position: absolute;
    left: 0;
    right: 0;
    top: 7px;
    height: 3px;
    background:
        linear-gradient(#9f9e95, #9f9e95) 0 0 / 1px 100% no-repeat,
        linear-gradient(#9f9e95, #9f9e95) 42px 0 / 1px 100% no-repeat,
        linear-gradient(#9f9e95, #9f9e95) 94px 0 / 1px 100% no-repeat,
        linear-gradient(#9f9e95, #9f9e95) 100% 0 / 1px 100% no-repeat;
}
.slider-knob {
    position: absolute;
    left: 41px;
    top: -4px;
    width: 11px;
    height: 11px;
    border: 1px solid #999;
    border-radius: 50%;
    background: #f4f3ea;
}

/* windows taskbar */
.taskbar {
    height: 34px;
    flex: none;
    display: flex;
    align-items: center;
    padding-top: 4px;
    color: #fff;
    background: linear-gradient(#1f2f86 0, #3165c4 3%, #3682e5 6%, #4490e6 10%, #3883e5 12%, #2b71e0 15%, #2663da 18%, #235bd6 20%, #2258d5 23%, #2157d6 38%, #245ddb 54%, #2562df 86%, #245fdc 89%, #2158d4 92%, #1d4ec0 95%, #1941a5 98%);
}
.start {
    width: 96px;
    height: 34px;
    flex: none;
    margin-top: -4px;
    display: flex;
    align-items: center;
    gap: 4px;
    padding: 3px 0 0 10px;
    border-radius: 0 10px 10px 0;
    background: linear-gradient(#2f7f2f 0, #5aa75a 8%, #3f943f 18%, #388e38 60%, #2f7b2f 90%, #286a28 100%);
    font: italic bold 17px "Liberation Sans", sans-serif;
    text-shadow: 1px 1px 1px #1d4a1d;
}
.start-flag {
    width: 20px;
    height: 20px;
}
.task-grip {
    width: 4px;
    height: 20px;
    flex: none;
    margin-left: 9px;
    background: repeating-linear-gradient(#163d9c 0 2px, #5e93e8 2px 4px);
}
.quick {
    width: 244px;
    flex: none;
    display: flex;
    justify-content: space-between;
    padding: 0 13px 0 9px;
}
.quick + .task-grip {
    margin-left: 3px;
}
.tasks {
    display: flex;
    gap: 1.25px;
    margin-left: 7px;
}
.task-btn {
    width: 120px;
    height: 24px;
    flex: none;
    display: flex;
    align-items: center;
    gap: 3px;
    padding-left: 9px;
    border-radius: 3px;
    background: linear-gradient(#4d8cf2, #3b7ff0 20%, #3a7de9);
    box-shadow: inset 1px 1px 0 rgba(255, 255, 255, .2);
    font: 10.8px "DejaVu Sans Condensed", "DejaVu Sans", sans-serif;
    white-space: nowrap;
}
.task-active {
    background: #1e52b7;
    box-shadow: inset 1px 1px 2px #0f2f7a;
}
.task-group {
    width: 121px;
}
.task-group em {
    font-style: normal;
    font-weight: bold;
    color: #f5c96a;
}
.group-caret {
    margin-left: auto;
    margin-right: 4px;
    border: 3px solid transparent;
    border-top: 3px solid #fff;
    border-bottom: 0;
}
.task-grip-r {
    margin-left: 7px;
}
.lang {
    width: 16px;
    height: 16px;
    flex: none;
    margin-left: 8px;
    line-height: 16px;
    text-align: center;
    background: #3c6fcf;
}
.help-bubble {
    margin-left: 6px;
}
.switcher {
    width: 14px;
    height: 20px;
    flex: none;
    margin-left: 8px;
}
.tray {
    flex: 1;
    align-self: stretch;
    display: flex;
    align-items: center;
    margin-left: 14px;
    border-left: 1px solid #0a4fa8;
    background: linear-gradient(#13a6ea, #0f92e3);
}
.tray-chevron {
    width: 18px;
    height: 18px;
    flex: none;
    margin-left: -9px;
    margin-right: 1px;
}
.tray .ico + .ico {
    margin-left: 2px;
}
.clock {
    margin-left: 6px;
    font-size: 10.5px;
}
```
